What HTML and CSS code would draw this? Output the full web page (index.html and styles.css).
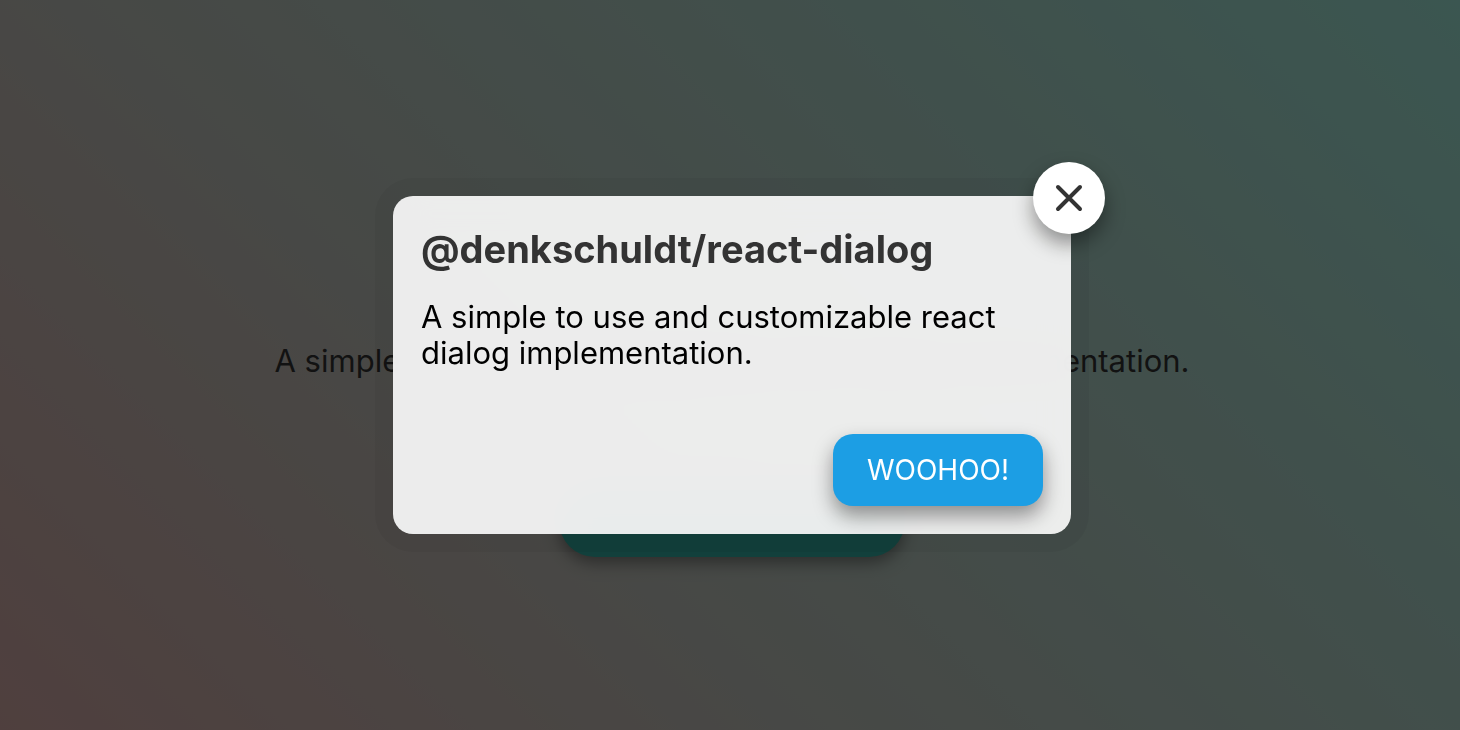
FILE: index.html
```html
<!DOCTYPE html>
<html lang="en">
<head>
<meta charset="utf-8">
<meta name="viewport" content="width=device-width, initial-scale=1">
<title>@denkschuldt/react-dialog</title>
<link rel="stylesheet" href="styles.css">
</head>
<body>
<main class="page">
  <p class="page-text">A simple to use and customizable react dialog implementation.</p>
  <button class="page-button" type="button" aria-label="Open dialog"></button>
</main>
<div class="overlay">
  <section class="dialog" role="dialog" aria-modal="true" aria-labelledby="dialog-title">
    <button class="close" type="button" aria-label="Close">
      <svg class="close-icon" viewBox="0 0 28 28" aria-hidden="true"><path d="M3 3 25 25M25 3 3 25"/></svg>
    </button>
    <h1 class="title" id="dialog-title">@denkschuldt/react-dialog</h1>
    <p class="text">A simple to use and customizable react dialog implementation.</p>
    <footer class="actions">
      <button class="action" type="button">WOOHOO!</button>
    </footer>
  </section>
</div>
</body>
</html>
```

FILE: styles.css
```css
* { box-sizing: border-box; }

body {
  margin: 0;
  font-family: Inter, "Liberation Sans", sans-serif;
  color: #000;
}

.page {
  display: flex;
  flex-direction: column;
  align-items: center;
  gap: 106px;
  min-height: 100vh;
  padding: 343px 0 0 4px;
  background: linear-gradient(45deg, #cd9894, #b4b4ac 34%, #8ae4d2);
}

.page-text {
  margin: 0;
  font-size: 31px;
  line-height: 36px;
}

.page-button {
  width: 346px;
  height: 72px;
  border: 0;
  border-radius: 36px;
  background: #009b8c;
  box-shadow: 0 6px 16px rgba(0, 0, 0, 0.5);
}

.overlay {
  position: fixed;
  inset: 0;
  display: flex;
  align-items: center;
  justify-content: center;
  padding-left: 4px;
  background: rgba(25, 25, 25, 0.7);
}

.dialog {
  position: relative;
  width: 678px;
  max-width: 90%;
  padding: 28px;
  border-radius: 20px;
  background: rgba(246, 246, 246, 0.95);
  backdrop-filter: blur(16px);
  box-shadow: 0 0 0 18px rgba(0, 0, 0, 0.04);
}

.title {
  margin: 0 0 25px;
  font-size: 38px;
  line-height: 50px;
  font-weight: 700;
  color: #333;
}

.text {
  margin: 0;
  font-size: 31px;
  line-height: 36px;
}

.actions {
  display: flex;
  justify-content: flex-end;
  margin-top: 63px;
}

.action {
  padding: 18px 34px;
  border: 0;
  border-radius: 20px;
  background: #1c9ee4;
  box-shadow: 0 10px 20px rgba(0, 0, 0, 0.4);
  font: inherit;
  font-size: 28px;
  line-height: 36px;
  color: #fff;
}

.close {
  position: absolute;
  top: -34px;
  right: -34px;
  display: grid;
  place-items: center;
  width: 72px;
  height: 72px;
  padding: 0;
  border: 0;
  border-radius: 50%;
  background: #fff;
  box-shadow: 0 10px 20px rgba(0, 0, 0, 0.4);
}

.close-icon {
  width: 28px;
  height: 28px;
  fill: none;
  stroke: #333;
  stroke-width: 4;
  stroke-linecap: round;
}
```
